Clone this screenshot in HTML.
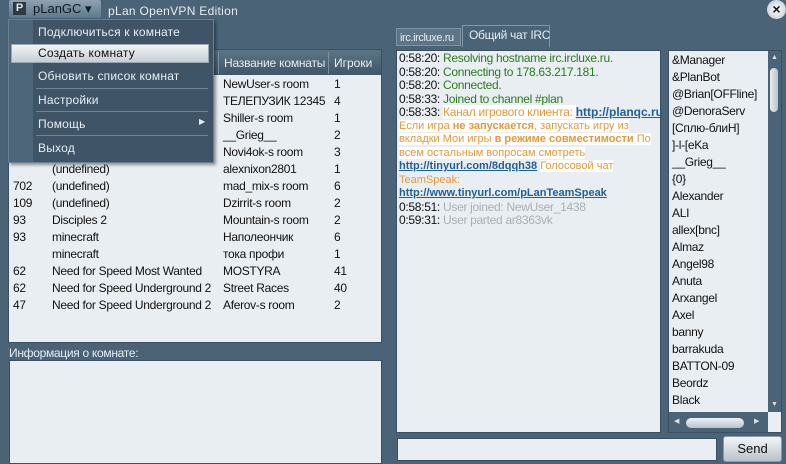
<!DOCTYPE html>
<html><head><meta charset="utf-8"><style>
*{margin:0;padding:0;box-sizing:border-box}
body{width:786px;height:464px;overflow:hidden;background:#4b6377;font-family:"Liberation Sans",sans-serif;font-size:12px;color:#111;position:relative}
.a{position:absolute;white-space:nowrap}
.box{position:absolute;background:#e9eef2;border:1px solid #3a5062}
.r{position:absolute;height:17px;line-height:17px;letter-spacing:-0.3px}
.m{position:absolute;left:38px;color:#e8eef2;font-size:12px;letter-spacing:0.2px}
.sep{position:absolute;left:36px;width:172px;height:1px;background:#6d8396}
</style></head><body>
<div class="a" style="left:9px;top:0;width:92px;height:18px;background:linear-gradient(#8ea2b2,#5f788b);border-radius:2px"></div>
<div class="a" style="left:13px;top:2px;width:13px;height:13px;background:#2d3a44;color:#dfe6ea;font-size:11px;font-weight:bold;line-height:13px;text-align:center">P</div>
<div class="a" style="left:33px;top:1px;color:#0f1a22;font-size:13px">pLanGC ▾</div>
<div class="a" style="left:108px;top:4px;color:#e6edf2;font-size:12px;letter-spacing:0.3px">pLan OpenVPN Edition</div>
<div class="a" style="left:767px;top:0;width:19px;height:19px;border-radius:50%;background:radial-gradient(#fff,#b9c3ca);color:#111;font-weight:bold;font-size:14px;line-height:19px;text-align:center">×</div>

<div class="box" style="left:8px;top:49px;width:374px;height:294px"></div>
<div class="a" style="left:9px;top:50px;width:372px;height:25px;background:linear-gradient(#5c7584,#3f5769)"></div>
<div class="a" style="left:218px;top:52px;width:1px;height:22px;background:#7c92a2"></div>
<div class="a" style="left:328px;top:52px;width:1px;height:22px;background:#7c92a2"></div>
<div class="a" style="left:224px;top:56px;color:#e6edf2;letter-spacing:-0.2px">Название комнаты</div>
<div class="a" style="left:334px;top:56px;color:#e6edf2">Игроки</div>
<div class="r" style="left:223px;top:76px">NewUser-s room</div><div class="r" style="left:334px;top:76px">1</div>
<div class="r" style="left:223px;top:93px">ТЕЛЕПУЗИК 12345</div><div class="r" style="left:334px;top:93px">4</div>
<div class="r" style="left:223px;top:110px">Shiller-s room</div><div class="r" style="left:334px;top:110px">1</div>
<div class="r" style="left:223px;top:127px">__Grieg__</div><div class="r" style="left:334px;top:127px">2</div>
<div class="r" style="left:223px;top:144px">Novi4ok-s room</div><div class="r" style="left:334px;top:144px">3</div>
<div class="r" style="left:52px;top:161px">(undefined)</div><div class="r" style="left:223px;top:161px">alexnixon2801</div><div class="r" style="left:334px;top:161px">1</div>
<div class="r" style="left:13px;top:178px">702</div><div class="r" style="left:52px;top:178px">(undefined)</div><div class="r" style="left:223px;top:178px">mad_mix-s room</div><div class="r" style="left:334px;top:178px">6</div>
<div class="r" style="left:13px;top:195px">109</div><div class="r" style="left:52px;top:195px">(undefined)</div><div class="r" style="left:223px;top:195px">Dzirrit-s room</div><div class="r" style="left:334px;top:195px">2</div>
<div class="r" style="left:13px;top:212px">93</div><div class="r" style="left:52px;top:212px">Disciples 2</div><div class="r" style="left:223px;top:212px">Mountain-s room</div><div class="r" style="left:334px;top:212px">2</div>
<div class="r" style="left:13px;top:229px">93</div><div class="r" style="left:52px;top:229px">minecraft</div><div class="r" style="left:223px;top:229px">Наполеончик</div><div class="r" style="left:334px;top:229px">6</div>
<div class="r" style="left:52px;top:246px">minecraft</div><div class="r" style="left:223px;top:246px">тока профи</div><div class="r" style="left:334px;top:246px">1</div>
<div class="r" style="left:13px;top:263px">62</div><div class="r" style="left:52px;top:263px">Need for Speed Most Wanted</div><div class="r" style="left:223px;top:263px">MOSTYRA</div><div class="r" style="left:334px;top:263px">41</div>
<div class="r" style="left:13px;top:280px">62</div><div class="r" style="left:52px;top:280px">Need for Speed Underground 2</div><div class="r" style="left:223px;top:280px">Street Races</div><div class="r" style="left:334px;top:280px">40</div>
<div class="r" style="left:13px;top:297px">47</div><div class="r" style="left:52px;top:297px">Need for Speed Underground 2</div><div class="r" style="left:223px;top:297px">Aferov-s room</div><div class="r" style="left:334px;top:297px">2</div>

<div class="a" style="left:9px;top:346px;color:#e6edf2;letter-spacing:-0.3px">Информация о комнате:</div>
<div class="box" style="left:9px;top:360px;width:373px;height:104px"></div>

<div class="a" style="left:8px;top:19px;width:206px;height:144px;background:#3f5567;border:1px solid #6a7f90;box-shadow:2px 2px 3px rgba(0,0,0,.4)"></div>
<div class="a" style="left:9px;top:20px;width:24px;height:142px;background:#4e6679"></div>
<div class="m" style="top:25px">Подключиться к комнате</div>
<div class="a" style="left:11px;top:44px;width:198px;height:19px;background:linear-gradient(#f2f4f5,#c6ced4);border:1px solid #9aa8b2"></div>
<div class="m" style="top:46px;color:#111">Создать комнату</div>
<div class="m" style="top:69px">Обновить список комнат</div>
<div class="sep" style="top:88px"></div>
<div class="m" style="top:93px">Настройки</div>
<div class="sep" style="top:111px"></div>
<div class="m" style="top:117px">Помощь</div>
<div class="a" style="left:199px;top:117px;color:#e8eef2;font-size:8px">▶</div>
<div class="sep" style="top:135px"></div>
<div class="m" style="top:141px">Выход</div>

<div class="a" style="left:396px;top:28px;width:65px;height:18px;background:#5d7587;border:1px solid #7e93a3;color:#e6edf2;padding:3px 0 0 3px;font-size:11px;letter-spacing:-0.4px">irc.ircluxe.ru</div>
<div class="a" style="left:462px;top:25px;width:88px;height:22px;background:#4b6377;border:1px solid #8298a8;border-bottom:none;color:#e6edf2;padding:2px 0 0 6px;letter-spacing:-0.3px">Общий чат IRC</div>

<div class="box" style="left:396px;top:50px;width:265px;height:383px"></div>
<div class="a" style="left:399px;top:52px;line-height:13.5px;letter-spacing:-0.3px;font-size:12px">
<div>0:58:20: <span style="color:#2b7a1c">Resolving hostname irc.ircluxe.ru.</span></div>
<div>0:58:20: <span style="color:#2b7a1c">Connecting to 178.63.217.181.</span></div>
<div>0:58:20: <span style="color:#2b7a1c">Connected.</span></div>
<div>0:58:33: <span style="color:#2b7a1c">Joined to channel #plan</span></div>
<div>0:58:33: <span style="color:#e39a3b;background:#fff">Канал игрового клиента: </span> <b style="color:#1f5f9a;text-decoration:underline;letter-spacing:0">http://planqc.ru</b></div>
<div style="color:#e39a3b;font-size:11px;letter-spacing:0"><span style="background:#fff">Если игра <b>не запускается</b>, запускать игру из</span></div>
<div style="color:#e39a3b;font-size:11px;letter-spacing:0"><span style="background:#fff">вкладки Мои игры <b>в режиме совместимости</b> По</span></div>
<div style="color:#e39a3b;font-size:11px;letter-spacing:0"><span style="background:#fff">всем остальным вопросам смотреть</span></div>
<div style="font-size:11px;letter-spacing:0"><b style="color:#1f5f9a;text-decoration:underline">http://tinyurl.com/8dqqh38</b> <span style="color:#e39a3b;background:#fff">Голосовой чат</span></div>
<div style="color:#e39a3b;font-size:11px;letter-spacing:0">TeamSpeak:</div>
<div style="font-size:11px;letter-spacing:0"><b style="color:#1f5f9a;text-decoration:underline">http://www.tinyurl.com/pLanTeamSpeak</b></div>
<div>0:58:51: <span style="color:#a8b0b6">User joined: NewUser_1438</span></div>
<div>0:59:31: <span style="color:#a8b0b6">User parted ar8363vk</span></div>
</div>

<div class="box" style="left:668px;top:50px;width:114px;height:383px"></div>
<div class="a" style="left:669px;top:51px;width:99px;height:361px;overflow:hidden">
<div style="position:relative;left:3px;top:1px;line-height:17px;letter-spacing:-0.3px">&amp;Manager<br>&amp;PlanBot<br>@Brian[OFFline]<br>@DenoraServ<br>[Сплю-блиН]<br>]-l-[eKa<br>__Grieg__<br>{0}<br>Alexander<br>ALI<br>allex[bnc]<br>Almaz<br>Angel98<br>Anuta<br>Arxangel<br>Axel<br>banny<br>barrakuda<br>BATTON-09<br>Beordz<br>Black<br>Bl</div></div>
<div class="a" style="left:768px;top:51px;width:13px;height:361px;background:#4b6377"></div>
<div class="a" style="left:771px;top:54px;color:#d8e0e6;font-size:7px">▲</div>
<div class="a" style="left:770px;top:68px;width:8px;height:44px;border-radius:4px;background:linear-gradient(90deg,#e8edf0,#b7c3cb)"></div>
<div class="a" style="left:771px;top:401px;color:#d8e0e6;font-size:7px">▼</div>
<div class="a" style="left:669px;top:412px;width:99px;height:20px;background:#4b6377"></div>
<div class="a" style="left:674px;top:417px;color:#d8e0e6;font-size:7px">◀</div>
<div class="a" style="left:686px;top:418px;width:58px;height:10px;border-radius:5px;background:linear-gradient(#eef2f4,#b7c3cb)"></div>
<div class="a" style="left:754px;top:417px;color:#d8e0e6;font-size:7px">▶</div>

<div class="box" style="left:397px;top:438px;width:320px;height:23px"></div>
<div class="a" style="left:723px;top:436px;width:59px;height:26px;border-radius:3px;background:linear-gradient(#f3f5f6,#b8c3ca);border:1px solid #8a9aa6;text-align:center;line-height:24px;font-size:13px">Send</div>
</body></html>
